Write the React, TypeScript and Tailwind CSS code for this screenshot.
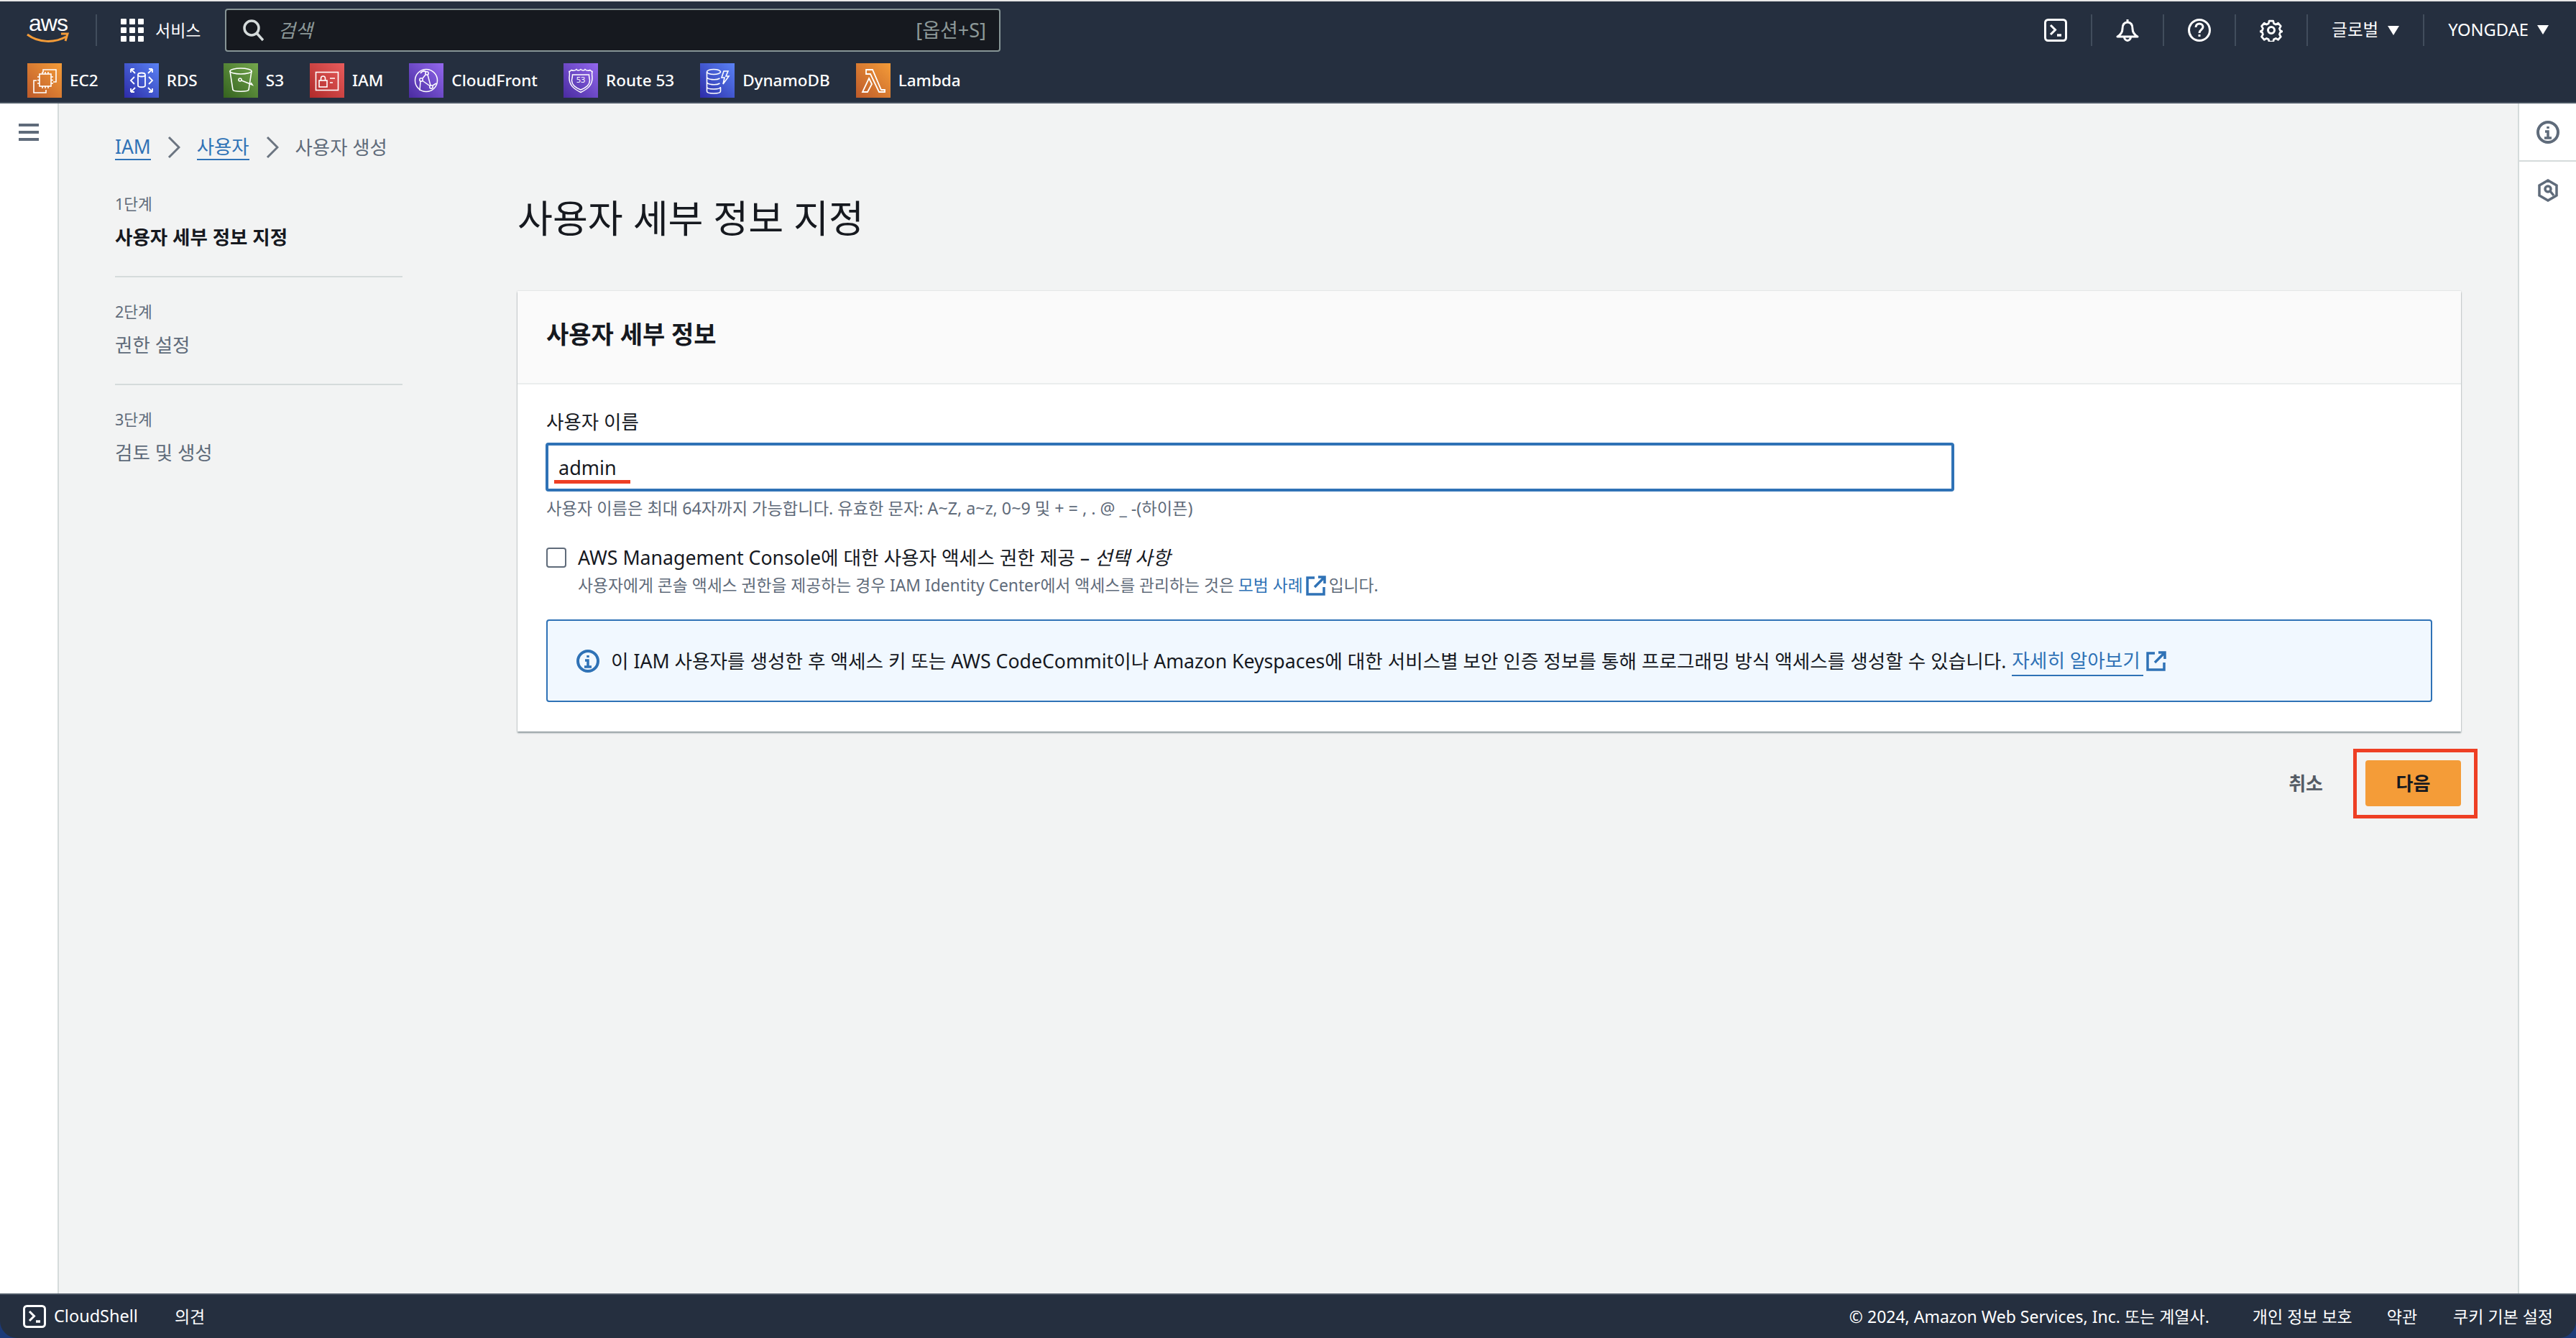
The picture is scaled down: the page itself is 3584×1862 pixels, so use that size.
import React from "react";

const services = [
    { name: "EC2", bg: "from-[#bd5a2a] to-[#f49c38]", icon: <Ec2Icon /> },
    { name: "RDS", bg: "from-[#2e2aa8] to-[#5b82f5]", icon: <RdsIcon /> },
    { name: "S3", bg: "from-[#35631f] to-[#75a84e]", icon: <S3Icon /> },
    { name: "IAM", bg: "from-[#b02a2a] to-[#e85c5c]", icon: <IamIcon /> },
    { name: "CloudFront", bg: "from-[#4a2ba0] to-[#9468ee]", icon: <CloudFrontIcon /> },
    { name: "Route 53", bg: "from-[#4a2ba0] to-[#9468ee]", icon: <Route53Icon /> },
    { name: "DynamoDB", bg: "from-[#2e2aa8] to-[#5b82f5]", icon: <DynamoIcon /> },
    { name: "Lambda", bg: "from-[#bd5a2a] to-[#f49c38]", icon: <LambdaIcon /> },
];

function Ec2Icon() {
    return (
        <svg viewBox="0 0 48 48" className="w-12 h-12" fill="none" stroke="white" strokeWidth="1.6">
            <path d="M22 13V9h18v17h-4M13 24H9v17h17v-4" />
            <rect x="17" y="15" width="16" height="17" />
            <path d="M21 12v3M25 12v3M29 12v3M21 32v3M25 32v3M29 32v3M14 19h3M14 23.500h3M14 28h3M33 19h3M33 23.500h3M33 28h3" />
        </svg>
    );
}

function RdsIcon() {
    return (
        <svg viewBox="0 0 48 48" className="w-12 h-12" fill="none" stroke="white" strokeWidth="1.8">
            <ellipse cx="24" cy="16" rx="5" ry="2.500" />
            <path d="M19 16v15c0 3 10 3 10 0V16" />
            <path d="M9 8l6 6M9 8v5M9 8h5M39 8l-6 6M39 8v5M39 8h-5M9 40l6-6M9 40v-5M9 40h5M39 40l-6-6M39 40v-5M39 40h-5" />
            <path d="M14 19l-5 5 5 5M34 19l5 5-5 5" />
        </svg>
    );
}

function S3Icon() {
    return (
        <svg viewBox="0 0 48 48" className="w-12 h-12" fill="none" stroke="white" strokeWidth="1.6">
            <ellipse cx="24" cy="11" rx="15" ry="4" />
            <path d="M9 11l4 26c1 3 21 3 22 0l4-26" />
            <circle cx="23" cy="23" r="2" />
            <path d="M25 24l15 6-2-3" />
        </svg>
    );
}

function IamIcon() {
    return (
        <svg viewBox="0 0 48 48" className="w-12 h-12" fill="none" stroke="white" strokeWidth="1.6">
            <rect x="8.500" y="12.500" width="31" height="25" />
            <rect x="13" y="24" width="11" height="9" />
            <path d="M15.500 24v-3a3 3 0 0 1 6 0v3M28 21h7M28 27h4" />
        </svg>
    );
}

function CloudFrontIcon() {
    return (
        <svg viewBox="0 0 48 48" className="w-12 h-12" fill="none" stroke="white" strokeWidth="1.5">
            <circle cx="24" cy="24" r="15.500" />
            <circle cx="25" cy="14" r="2.200" />
            <circle cx="17" cy="23" r="2.200" />
            <circle cx="31" cy="33" r="2.200" />
            <path d="M19 21l4-5M26 16l4 15M19 24.500l10 7M16 25l-1 13M24 12c-3-2-6-1-8 2M33 31l5-3" />
        </svg>
    );
}

function Route53Icon() {
    return (
        <svg viewBox="0 0 48 48" className="w-12 h-12" fill="none" stroke="white" strokeWidth="1.5">
            <path d="M24 8.500c-2 2-5 2-6 0-2 2-5 2-7 1-1 1-2 2-3 2 1 4 0 6 0 9 0 10 6 15 16 20 10-5 16-10 16-20 0-3-1-5 0-9-1 0-2-1-3-2-2 1-5 1-7-1-1 2-4 2-6 0z" />
            <path d="M12.500 16h23c0 4 1 6 1 8 0 6-5 10-12.500 13C16.500 34 11.500 30 11.500 24c0-2 1-4 1-8z" />
            <text x="24" y="27" fill="white" stroke="none" fontSize="11" textAnchor="middle" fontFamily="Noto Sans, sans-serif">53</text>
        </svg>
    );
}

function DynamoIcon() {
    return (
        <svg viewBox="0 0 48 48" className="w-12 h-12" fill="none" stroke="white" strokeWidth="1.6">
            <ellipse cx="19" cy="12" rx="9.500" ry="3.500" />
            <path d="M9.500 12v27c0 4 19 4 19 0v-5M9.500 19c0 4 13 5 18 2M9.500 26c0 4 13 5 18 2M9.500 33c0 4 19 4 19 0" />
            <path d="M33 11h6l-3 7h4l-8 11 2-9h-4z" />
        </svg>
    );
}

function LambdaIcon() {
    return (
        <svg viewBox="0 0 48 48" className="w-12 h-12" fill="none" stroke="white" strokeWidth="1.8">
            <path d="M14 9h9l12 28h5v3h-8L20 15h-6zM18 21l4 8-6 11H9z" />
        </svg>
    );
}

function TerminalIcon() {
    return (
        <svg viewBox="0 0 32 32" className="w-8 h-8 shrink-0" fill="none" stroke="white" strokeWidth="3">
            <rect x="1.500" y="1.500" width="29" height="29" rx="4" />
            <path d="M9 9l6.500 6.500L9 22" />
            <path d="M18 23h6" strokeWidth="3.500" />
        </svg>
    );
}

function BellIcon() {
    return (
        <svg viewBox="0 0 32 32" className="w-8 h-8" fill="none" stroke="white" strokeWidth="3" strokeLinejoin="round">
            <path d="M16 5c-5 0-7 4-7 9 0 5-2 8-7 11h28c-5-3-7-6-7-11 0-5-2-9-7-9z" />
            <path d="M16 1v4" />
            <path d="M11.500 25a4.500 5.500 0 0 0 9 0" />
        </svg>
    );
}

function HelpIcon() {
    return (
        <svg viewBox="0 0 32 32" className="w-8 h-8" fill="none" stroke="white" strokeWidth="3">
            <circle cx="16" cy="16" r="14.500" />
            <path d="M11 12c0-3 2-5 5-5s5 2 5 4.500c0 4-5 4-5 8.500" />
            <path d="M16 22v3" />
        </svg>
    );
}

// 8 tooth cog, heavier than the lucide one
function GearIcon() {
    return (
        <svg viewBox="0 0 32 32" className="w-8 h-8" fill="none" stroke="white" strokeWidth="3" strokeLinejoin="round">
            <path d="M13 2h6l1 4 3 1.500 3.500-2 4 4.500-2 3.500 1 3 3 1.500-3 1.500-1 3 2 3.500-4 4.500-3.500-2-3 1.500-1 3.500h-6l-1-3.500-3-1.500-3.500 2-4-4.500 2-3.500-1-3-3-1.500 3-1.500 1-3-2-3.500 4-4.500 3.500 2 3-1.500z" transform="translate(1.200 1.200) scale(.92)" />
            <circle cx="16" cy="16" r="4.500" />
        </svg>
    );
}

function InfoIcon({ color }: { color: string }) {
    return (
        <svg viewBox="0 0 32 32" className="w-8 h-8 shrink-0" fill="none" stroke={color} strokeWidth="4">
            <circle cx="16" cy="16" r="14" />
            <path d="M16 8v3M12 15h4v8M11 24h10" strokeWidth="3.500" />
        </svg>
    );
}

function HexIcon() {
    return (
        <svg viewBox="0 0 28 32" className="w-7 h-8" fill="none" stroke="#5f6b7a" strokeWidth="3.500">
            <path d="M14 2L26 9v14l-12 7-12-7V9z" />
            <circle cx="14" cy="14" r="4" />
            <path d="M17 17l5 6" />
        </svg>
    );
}

function ExternalIcon() {
    return (
        <svg viewBox="0 0 28 28" className="w-7 h-7 shrink-0" fill="none" stroke="#2f72b6" strokeWidth="3.500">
            <path d="M12 3H2v23h23V16" />
            <path d="M12 16L25 3M17 2h9v9" />
        </svg>
    );
}

function Chevron() {
    return (
        <svg viewBox="0 0 18 32" className="w-[18px] h-8 shrink-0" fill="none" stroke="#6b7480" strokeWidth="3">
            <path d="M2 2l14 14L2 30" />
        </svg>
    );
}

const Divider = () => <div className="w-[2px] h-[44px] bg-[#414d5c]" />;
const Caret = () => <div className="w-0 h-0 border-x-[8px] border-x-transparent border-t-[13px] border-t-white" />;

function Step({ n, title, active }: { n: number; title: string; active?: boolean }) {
    return (
        <div>
            <div className="h-[30px] text-[21.500px] leading-[30px] text-[#5f6b7a]">{n}단계</div>
            <div
                className={
                    active
                        ? "mt-[16px] h-[29px] text-[26.500px] leading-[30px] font-bold text-[#16191f]"
                        : "mt-[16px] h-[29px] text-[26.500px] leading-[30px] text-[#5f6b7a]"
                }
            >
                {title}
            </div>
        </div>
    );
}

export default function App() {
    return (
        <div className="w-[3584px] h-[1862px] flex flex-col bg-[#1c3a78] overflow-hidden font-['Noto_Sans','Noto_Sans_CJK_KR',sans-serif]">
            <div className="h-[2px] bg-[#e8e8e8]" />
            <header className="bg-[#252f3f] border-b-2 border-[#4a5563] text-white">
                <div className="h-[60px] mt-[10px] flex items-center pl-[36px] pr-[38px]">
                    <div className="w-[62px] h-[46px] flex flex-col items-center">
                        <span className="text-[32px] leading-[26px] font-['Liberation_Sans',sans-serif] tracking-[-1px]">aws</span>
                        <svg viewBox="0 0 62 18" className="w-[62px] h-[18px]" fill="none" stroke="#f49c38" strokeWidth="3">
                            <path d="M2 3c16 12 38 12 54 3" />
                            <path d="M49 2h9l-3 10" />
                        </svg>
                    </div>
                    <div className="ml-[35px]"><Divider /></div>
                    <div className="ml-[33px] w-[145px] flex items-center gap-[16px]">
                        <div className="grid grid-cols-3 gap-[4px] w-8">
                            {Array.from({ length: 9 }).map((_, i) => (
                                <div key={i} className="h-[8px] rounded-[1px] bg-white" />
                            ))}
                        </div>
                        <span className="text-[23px] whitespace-nowrap">서비스</span>
                    </div>
                    <div className="w-[1079px] h-[60px] bg-[#16191f] border-2 border-[#879596] rounded-[4px] flex items-center pl-[22px] pr-[18px]">
                        <svg viewBox="0 0 30 32" className="w-[30px] h-8" fill="none" stroke="#d5dbdb" strokeWidth="3.500">
                            <circle cx="13" cy="13" r="10" />
                            <path d="M20 20l9 10" />
                        </svg>
                        <span className="ml-[20px] text-[26px] italic text-[#8d9999]">검색</span>
                        <span className="ml-auto text-[27px] text-[#8d9999]">[옵션+S]</span>
                    </div>
                    <div className="ml-auto flex items-center gap-[33px]">
                        <TerminalIcon />
                        <Divider />
                        <BellIcon />
                        <Divider />
                        <HelpIcon />
                        <Divider />
                        <GearIcon />
                        <Divider />
                        <div className="flex items-center gap-[13px]">
                            <span className="text-[23.500px]">글로벌</span>
                            <Caret />
                        </div>
                        <Divider />
                        <div className="flex items-center gap-[12px]">
                            <span className="text-[23.700px]">YONGDAE</span>
                            <Caret />
                        </div>
                    </div>
                </div>
                <div className="mt-[16px] mb-[6px] h-[48px] pl-[38px] flex items-center gap-[36px]">
                    {services.map((s) => (
                        <div key={s.name} className="flex items-center gap-[11px]">
                            <div className={`w-12 h-12 bg-linear-to-tr ${s.bg}`}>{s.icon}</div>
                            <span className="text-[22.500px] font-medium whitespace-nowrap">{s.name}</span>
                        </div>
                    ))}
                </div>
            </header>

            <main className="flex-1 flex bg-[#f2f3f3] min-h-0">
                <aside className="w-[82px] bg-white border-r-2 border-[#d5dbdb] pt-[28px] pl-[26px]">
                    <div className="w-[28px] flex flex-col gap-[6px]">
                        <div className="h-[4px] bg-[#5f6b7a]" />
                        <div className="h-[4px] bg-[#5f6b7a]" />
                        <div className="h-[4px] bg-[#5f6b7a]" />
                    </div>
                </aside>

                <div className="flex-1 pl-[78px] pr-[79px] pt-[44px]">
                    <nav className="h-[34px] flex items-center text-[26.400px] leading-[34px]">
                        <span className="text-[#2f72b6] border-b-2 border-[#2f72b6] h-[36px]">IAM</span>
                        <div className="mx-[23px]"><Chevron /></div>
                        <span className="text-[#2f72b6] border-b-2 border-[#2f72b6] h-[36px]">사용자</span>
                        <div className="mx-[23px]"><Chevron /></div>
                        <span className="text-[#5f6b7a]">사용자 생성</span>
                    </nav>

                    <div className="flex">
                        <div className="w-[400px] pt-[47px] shrink-0">
                            <Step n={1} title="사용자 세부 정보 지정" active />
                            <div className="mt-[40px] mb-[33px] h-[2px] bg-[#d5dbdb]" />
                            <Step n={2} title="권한 설정" />
                            <div className="mt-[40px] mb-[33px] h-[2px] bg-[#d5dbdb]" />
                            <Step n={3} title="검토 및 생성" />
                        </div>

                        <div className="ml-[160px] flex-1 pt-[50px]">
                            <h1 className="h-[62px] text-[53.200px] leading-[64px] text-[#16191f]">사용자 세부 정보 지정</h1>

                            <section className="mt-[71px] bg-white shadow-[0_2px_2px_rgba(0,28,36,0.4),0_0_2px_rgba(0,28,36,0.15)]">
                                <div className="h-[130px] bg-[#fafafa] border-b-2 border-[#eaeded] flex items-center px-[40px] pb-[8px]">
                                    <h2 className="text-[34px] font-bold text-[#16191f]">사용자 세부 정보</h2>
                                </div>
                                <div className="px-[40px] pt-[37px] pb-[41px]">
                                    <div className="h-[30px] text-[26.500px] leading-[30px] text-[#16191f]">사용자 이름</div>
                                    <div className="relative mt-[14px] -ml-[1px] w-[1960px] h-[68px] bg-white border-4 border-[#2f72b6] rounded-[4px] flex items-center pl-[14px] pt-[2px] text-[27px] text-[#16191f]">
                                        admin
                                        <div className="absolute left-[8px] top-[48px] w-[106px] h-[5px] bg-[#ee3f24]" />
                                    </div>
                                    <div className="mt-[8px] h-[30px] text-[23.250px] leading-[30px] text-[#5f6b7a]">
                                        사용자 이름은 최대 64자까지 가능합니다. 유효한 문자: A~Z, a~z, 0~9 및 + = , . @ _ -(하이픈)
                                    </div>
                                    <div className="mt-[39px] h-[30px] flex items-center">
                                        <div className="w-[28px] h-[28px] bg-white border-2 border-[#5f6b7a] rounded-[4px]" />
                                        <span className="ml-[16px] text-[26.700px] leading-[30px] text-[#16191f]">
                                            AWS Management Console에 대한 사용자 액세스 권한 제공 – <i>선택 사항</i>
                                        </span>
                                    </div>
                                    <div className="mt-[9px] ml-[44px] h-[30px] flex items-center text-[22.800px] text-[#5f6b7a]">
                                        사용자에게 콘솔 액세스 권한을 제공하는 경우 IAM Identity Center에서 액세스를 관리하는 것은&nbsp;
                                        <span className="text-[#2f72b6]">모범 사례</span>
                                        <span className="mx-[4px]"><ExternalIcon /></span>
                                        입니다.
                                    </div>
                                    <div className="mt-[32px] h-[115px] bg-[#f1f8ff] border-2 border-[#2f72b6] rounded-[4px] flex items-center pl-[40px] text-[26.650px] text-[#16191f]">
                                        <InfoIcon color="#2f72b6" />
                                        <span className="ml-[16px] pt-[2px] whitespace-nowrap">
                                            이 IAM 사용자를 생성한 후 액세스 키 또는 AWS CodeCommit이나 Amazon Keyspaces에 대한 서비스별 보안 인증 정보를 통해 프로그래밍 방식 액세스를 생성할 수 있습니다.
                                        </span>
                                        <span className="ml-[8px] mt-[2px] text-[#2f72b6] border-b-2 border-[#2f72b6] whitespace-nowrap pr-[4px]">자세히 알아보기</span>
                                        <span className="ml-[4px]"><ExternalIcon /></span>
                                    </div>
                                </div>
                            </section>

                            <div className="mt-[40px] flex items-center justify-end">
                                <span className="text-[26px] font-bold text-[#545b64] mr-[59px]">취소</span>
                                <div className="relative w-[133px] h-[64px] bg-[#f49c38] rounded-[4px] flex items-center justify-center text-[26px] font-bold text-[#16191f]">
                                    다음
                                    <div className="absolute -left-[17px] -right-[23px] -top-[16px] -bottom-[17px] border-[5px] border-[#ee3f24]" />
                                </div>
                            </div>
                        </div>
                    </div>
                </div>

                <aside className="w-[81px] bg-white border-l-2 border-[#d5dbdb] flex flex-col items-center">
                    <div className="w-full h-[81px] pt-[24px] flex justify-center border-b-2 border-[#d5dbdb]">
                        <InfoIcon color="#5f6b7a" />
                    </div>
                    <div className="pt-[24px]"><HexIcon /></div>
                </aside>
            </main>

            <footer className="h-[62px] bg-[#252f3f] border-t-2 border-[#4a5563] rounded-b-[24px] flex items-center pl-[32px] pr-[32px] text-white text-[23px]">
                <TerminalIcon />
                <span className="ml-[11px] text-[23.500px]">CloudShell</span>
                <span className="ml-[51px]">의견</span>
                <span className="ml-auto text-[23px]">© 2024, Amazon Web Services, Inc. 또는 계열사.</span>
                <span className="ml-[60px]">개인 정보 보호</span>
                <span className="ml-[48px]">약관</span>
                <span className="ml-[50px]">쿠키 기본 설정</span>
            </footer>
        </div>
    );
}
